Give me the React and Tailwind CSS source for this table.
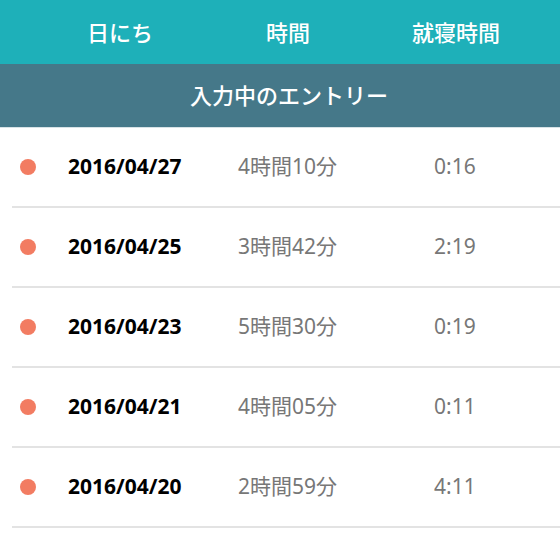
const entries = [
  { date: '2016/04/27', duration: '4時間10分', bedtime: '0:16' },
  { date: '2016/04/25', duration: '3時間42分', bedtime: '2:19' },
  { date: '2016/04/23', duration: '5時間30分', bedtime: '0:19' },
  { date: '2016/04/21', duration: '4時間05分', bedtime: '0:11' },
  { date: '2016/04/20', duration: '2時間59分', bedtime: '4:11' },
];

export default function App() {
  return (
    <div
      className="w-[560px] h-[543px] bg-white overflow-hidden"
      style={{ fontFamily: '"Noto Sans", "Noto Sans CJK JP", sans-serif' }}
    >
      {/* Column header */}
      <div className="h-[64px] bg-[#1eb0b9] grid grid-cols-3 items-center pl-[36px] pr-[20px] text-white text-[22px] font-medium">
        <div className="text-center">日にち</div>
        <div className="text-center">時間</div>
        <div className="text-center">就寝時間</div>
      </div>

      {/* Section title */}
      <div className="h-[64px] bg-[#457889] flex items-center justify-center pl-[18px] text-white text-[22px] font-medium border-b border-[#d7e2e6]">
        入力中のエントリー
      </div>

      <div className="pl-[12px]">
        {entries.map((e) => (
          <div key={e.date} className="h-[80px] flex items-center border-b-2 border-[#e3e3e3]">
            <div className="w-[56px] flex items-center pl-[8px]">
              <span className="w-[16px] h-[16px] rounded-full bg-[#f27c62]"></span>
            </div>
            <div className="w-[170px] text-[21px] font-bold text-black">{e.date}</div>
            <div className="w-[196px] text-[21px] text-[#777]">{e.duration}</div>
            <div className="text-[21px] text-[#777]">{e.bedtime}</div>
          </div>
        ))}
      </div>
    </div>
  );
}
